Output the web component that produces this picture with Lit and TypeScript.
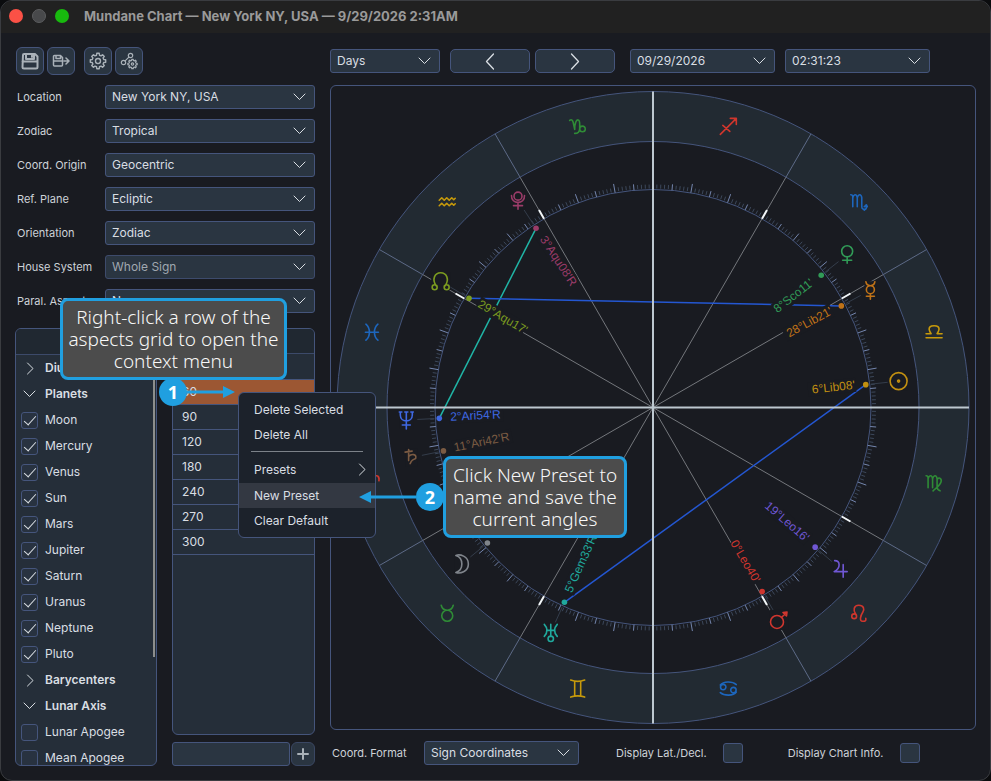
import { LitElement, html, svg, css, nothing } from "lit";
import { customElement, property } from "lit/decorators.js";
import { classMap } from "lit/directives/class-map.js";

const controlStyles = css`
  * { box-sizing: border-box; }
  button, select, input { font: inherit; color: inherit; margin: 0; }
  svg { display: block; }
  .line { fill: none; stroke: currentColor; stroke-linecap: round; stroke-linejoin: round; }
`;

const chevronDown = html`<svg class="line" width="13" height="8" viewBox="0 0 13 8" aria-hidden="true"><path d="M1 1l5.5 5.5L12 1"/></svg>`;
const chevronRight = html`<svg class="line" width="8" height="13" viewBox="0 0 8 13" aria-hidden="true"><path d="M1.5 1L7 6.5 1.5 12"/></svg>`;

@customElement("drop-down")
class DropDown extends LitElement {
  @property() value = "";
  @property() label = "";
  @property({ type: Boolean }) disabled = false;
  static styles = [controlStyles, css`
    :host { display: grid; align-items: center; height: 24px; color: #d9dee3; }
    select, svg { grid-area: 1 / 1; }
    select {
      appearance: none; width: 100%; height: 24px; padding: 0 28px 0 6px;
      background: #2a3541; border: 1px solid #45557c; border-radius: 3px;
    }
    select:disabled { color: #a0a8b0; border-color: #3d4b6c; opacity: 1; }
    svg { justify-self: end; margin-right: 9px; pointer-events: none; }
  `];
  render() {
    return html`
      <select aria-label=${this.label} ?disabled=${this.disabled}><option>${this.value}</option></select>
      ${chevronDown}`;
  }
}

const RAD = Math.PI / 180;
const R_OUTER = 316, R_SIGNS = 266, R_SCALE = 218, R_DOT = 214, R_GLYPH = 247, R_LABEL = 203;

/* Ecliptic longitude to chart coordinates: 0° Aries on the left, counter-clockwise. */
const at = (lon: number, r: number): [number, number] => [
  -r * Math.cos(lon * RAD),
  r * Math.sin(lon * RAD),
];

const FIRE = "#d0362d", EARTH = "#2f8b36", AIR = "#c79a0b", WATER = "#1d66bd";

const signs = [
  { name: "Aries", color: FIRE, d: "M-7-2C-8-8-2-9-1-3L0 8 1-3C2-9 8-8 7-2" },
  { name: "Taurus", color: EARTH, d: "M-6-8C-5-4-3-3 0-3S5-4 6-8M-5.5 2.5a5.5 5.5 0 1 0 11 0a5.5 5.5 0 1 0-11 0" },
  { name: "Gemini", color: AIR, d: "M-7-8.5Q0-6 7-8.5M-7 8.5Q0 6 7 8.5M-3-7V7M3-7V7" },
  { name: "Cancer", color: WATER, d: "M-8-3.5C-5-7.5 4-7.5 8-4M8 3.5C5 7.5-4 7.5-8 4M-7.8-1.5a2.7 2.7 0 1 0 5.4 0a2.7 2.7 0 1 0-5.4 0M2.4 1.5a2.7 2.7 0 1 0 5.4 0a2.7 2.7 0 1 0-5.4 0" },
  { name: "Leo", color: FIRE, d: "M-7 3a2.4 2.4 0 1 0 4.8 0a2.4 2.4 0 1 0-4.8 0M-3 1C-6-3-5-8 0-8S6-4 4-1 0 8 4 8 7 6 7 5" },
  { name: "Virgo", color: EARTH, d: "M-8-7Q-6-7-6-5V5M-6-4Q-5-7-3.5-7T-1.5-4V5M-1.5-4Q-.5-7 1-7T3-4V4Q3 7 6 8M3-3C4-6 8-5 7-1 6 3 2 5-1 8" },
  { name: "Libra", color: AIR, d: "M-8 5.5H8M-8 1.5H-3C-8-6-2-6.5 0-6.5S8-6 3 1.5H8" },
  { name: "Scorpio", color: WATER, d: "M-8-7Q-6-7-6-5V5M-6-4Q-5-7-3.5-7T-1.5-4V5M-1.5-4Q-.5-7 1-7T3-4V5Q3 8 7 7.5M7.5 3V6.5L5.5 8.5M5.5 5L7.5 3 8.5 5" },
  { name: "Sagittarius", color: FIRE, d: "M-8 8L8-8M2-8H8V-2M-5.5-1L1.5 5" },
  { name: "Capricorn", color: EARTH, d: "M-8-6C-6-7.5-5-6-4.5-4L-3 3C-3-3-1.5-7 .5-6.5S2-3 2 0V2C2 5.5 0 7-3 7M2 2.5a2.8 2.8 0 1 0 5.6 0a2.8 2.8 0 1 0-5.6 0" },
  { name: "Aquarius", color: AIR, d: "M-8-1.5L-5.5-4-3-1.5-.5-4 2-1.5 4.5-4 6.5-2 8-3.5M-8 4L-5.5 1.5-3 4-.5 1.5 2 4 4.5 1.5 6.5 3.5 8 2" },
  { name: "Pisces", color: WATER, d: "M-6-8Q-2.5-5-2.5 0T-6 8M6-8Q2.5-5 2.5 0T6 8M-6.5 0H6.5" },
];

const bodies = [
  { name: "Pluto", lon: 303.13, color: "#9b3c69", label: "3°Aqu08'R", w: 14, h: 18, d: "M-4-4.5a4 4 0 1 0 8 0a4 4 0 1 0-8 0M-6.5-5C-7 4 7 4 6.5-5M0 1.8V8.5M-4.5 5H4.5" },
  { name: "North Node", lon: 329.28, color: "#7c9c20", label: "29°Aqu17'", w: 19, h: 18, d: "M-4.5 4.5C-9-2-6-8.5 0-8.5S9-2 4.5 4.5M-8.5 6a2.5 2.5 0 1 0 5 0a2.5 2.5 0 1 0-5 0M3.5 6a2.5 2.5 0 1 0 5 0a2.5 2.5 0 1 0-5 0" },
  { name: "Neptune", lon: 2.9, color: "#3f68e2", label: "2°Ari54'R", w: 14, h: 18, d: "M-6-8V-5C-6 3 6 3 6-5V-8M0-8V9M-4 5H4M-7-8H-4.5M4.5-8H7M-1.5-8H1.5" },
  { name: "Saturn", lon: 11.7, color: "#7b5b43", label: "11°Ari42'R", w: 12, h: 18, d: "M-2.5-8V3M-6-5.5L1-6.5M-2.5-1C0-4 6-4 4.5 1-1 3 1 3-1 6 1 9 4 9" },
  { name: "Moon", lon: 39.3, color: "#7f848b", label: "", w: 14, h: 18, d: "M-6-8.5C-2-10 6.5-8 6.5 0S-2 10-6 8.5C2 6 2-6-6-8.5Z" },
  { name: "Uranus", lon: 65.55, color: "#20a99d", label: "5°Gem33'R", w: 14, h: 18, d: "M-6.5-8Q-1-2-6.5 4M6.5-8Q1-2 6.5 4M-4-2H4M0-8V4M-2.7 6.5a2.7 2.7 0 1 0 5.4 0a2.7 2.7 0 1 0-5.4 0" },
  { name: "Mars", lon: 120.67, color: "#d0362f", label: "0°Leo40'", w: 19, h: 20, d: "M-8.5 2a6.5 6.5 0 1 0 13 0a6.5 6.5 0 1 0-13 0M3-3L7.5-7.5M4-7.5L8-8 7.5-4Z" },
  { name: "Jupiter", lon: 139.27, color: "#7057d4", label: "19°Leo16'", w: 14, h: 18, d: "M-5.5-8C0-8 1-1-6 3H7M3-4V8.5" },
  { name: "Sun", lon: 186.13, color: "#c29011", label: "6°Lib08'", w: 18, h: 18, d: "M-8.5 0a8.5 8.5 0 1 0 17 0a8.5 8.5 0 1 0-17 0M-1 0a1 1 0 1 0 2 0a1 1 0 1 0-2 0" },
  { name: "Mercury", lon: 208.35, color: "#c07318", label: "28°Lib21'", w: 12, h: 18, d: "M-4.5-8.5C-4-5-2-4.5 0-4.5S4-5 4.5-8.5M-4-.5a4 4 0 1 0 8 0a4 4 0 1 0-8 0M0 3.5V9M-4 6H4" },
  { name: "Venus", lon: 218.18, color: "#319b57", label: "8°Sco11'", w: 13, h: 18, d: "M-5.5-3.5a5.5 5.5 0 1 0 11 0a5.5 5.5 0 1 0-11 0M0 2V8.5M-4.5 5.5H4.5" },
];

const aspects = [
  { from: "Pluto", to: "Neptune", color: "#20b5a6" },
  { from: "North Node", to: "Mercury", color: "#2457d2" },
  { from: "Uranus", to: "Sun", color: "#2457d2" },
];

@customElement("chart-wheel")
class ChartWheel extends LitElement {
  static styles = [controlStyles, css`
    :host { display: block; min-height: 0; border: 1px solid #45557c; border-radius: 6px; overflow: hidden; }
    .wheel { width: 100%; height: 100%; }
    .band { fill: none; stroke: #222a32; stroke-width: 50; }
    .ring { fill: none; stroke: #45557c; }
    .cusp { stroke: #74777c; }
    .cusp-band { stroke: #5d6a87; }
    .tick { stroke: #3c485b; }
    .tick.five, .tick.ten { stroke: #7486ae; }
    .tick.sign { stroke: #f2f6f8; stroke-width: 2; }
    .axis { stroke: #bdc8d0; stroke-width: 2; }
    .halo { fill: #191b21; }
    .leader { stroke: #343d4b; }
    .glyph { fill: none; stroke-width: 1.6; stroke-linecap: round; stroke-linejoin: round; }
    .aspect { stroke-width: 1.5; }
    .degree { font: 12px "Liberation Sans", Arial, sans-serif; }
  `];

  private segment(lon: number, a: number, b: number, cls: string) {
    const [x1, y1] = at(lon, a), [x2, y2] = at(lon, b);
    return svg`<line class=${cls} x1=${x1} y1=${y1} x2=${x2} y2=${y2} />`;
  }

  private tick(lon: number) {
    if (lon % 90 === 0) return nothing;
    if (lon % 30 === 0) return this.segment(lon, R_SCALE, R_SCALE + 10, "tick sign");
    if (lon % 10 === 0) return this.segment(lon, R_SCALE, R_SCALE + 9, "tick ten");
    if (lon % 5 === 0) return this.segment(lon, R_SCALE, R_SCALE + 6, "tick five");
    return this.segment(lon, R_SCALE + 1, R_SCALE + 5, "tick");
  }

  private degreeLabel(b: (typeof bodies)[number]) {
    if (!b.label) return nothing;
    const left = Math.cos(b.lon * RAD) > 0;
    const x = left ? -R_LABEL : R_LABEL;
    const turn = left ? -b.lon : 180 - b.lon;
    const w = b.label.length * 6;
    return svg`<g transform="rotate(${turn})">
      <rect class="halo" x=${left ? x - 1 : x - w + 1} y="-8" width=${w} height="14" />
      <text class="degree" x=${x} y="3" fill=${b.color} text-anchor=${left ? "start" : "end"}>${b.label}</text>
    </g>`;
  }

  render() {
    const degrees = Array.from({ length: 360 }, (_, i) => i);
    const cusps = degrees.filter((d) => d % 30 === 0);
    const find = (n: string) => bodies.find((b) => b.name === n)!;
    return html`<svg class="wheel" viewBox="-322 -321.5 644 643" role="img" aria-label="Mundane chart wheel">
      <circle class="band" r=${(R_OUTER + R_SIGNS) / 2} />
      <circle class="ring" r=${R_OUTER} />
      <circle class="ring" r=${R_SIGNS} />
      <circle class="ring" r=${R_SCALE} />
      ${cusps.map((d) => [this.segment(d, 0, R_SIGNS, "cusp"), this.segment(d, R_SIGNS, R_OUTER, "cusp-band")])}
      ${degrees.map((d) => this.tick(d))}
      ${aspects.map((a) => {
        const [x1, y1] = at(find(a.from).lon, R_DOT), [x2, y2] = at(find(a.to).lon, R_DOT);
        return svg`<line class="aspect" stroke=${a.color} x1=${x1} y1=${y1} x2=${x2} y2=${y2} />`;
      })}
      ${signs.map((s, i) => {
        const [x, y] = at(i * 30 + 15, 291);
        return svg`<path class="glyph" stroke=${s.color} transform="translate(${x} ${y})" d=${s.d} />`;
      })}
      ${bodies.map((b) => {
        const [x, y] = at(b.lon, R_GLYPH), [dx, dy] = at(b.lon, R_DOT);
        return svg`
          ${this.segment(b.lon, R_SCALE + 1, 236, "leader")}
          <rect class="halo" x=${x - b.w / 2} y=${y - b.h / 2} width=${b.w} height=${b.h} />
          <path class="glyph" stroke=${b.color} transform="translate(${x} ${y})" d=${b.d} />
          ${this.degreeLabel(b)}
          <circle cx=${dx} cy=${dy} r="2.8" fill=${b.color} />`;
      })}
      <line class="axis" x1=${-R_OUTER} x2=${R_OUTER} y1="0" y2="0" />
      <line class="axis" y1=${-R_OUTER} y2=${R_OUTER} x1="0" x2="0" />
    </svg>`;
  }
}

const settings = [
  { label: "Location", value: "New York NY, USA" },
  { label: "Zodiac", value: "Tropical" },
  { label: "Coord. Origin", value: "Geocentric" },
  { label: "Ref. Plane", value: "Ecliptic" },
  { label: "Orientation", value: "Zodiac" },
  { label: "House System", value: "Whole Sign", disabled: true },
  { label: "Paral. Aspects", value: "None" },
];

const objects = [
  { group: "Diurnal", open: false, items: [] },
  { group: "Planets", open: true, checked: true, items: ["Moon", "Mercury", "Venus", "Sun", "Mars", "Jupiter", "Saturn", "Uranus", "Neptune", "Pluto"] },
  { group: "Barycenters", open: false, items: [] },
  { group: "Lunar Axis", open: true, checked: false, items: ["Lunar Apogee", "Mean Apogee"] },
];

const angles = ["", "60", "90", "120", "180", "240", "270", "300"];

const gear = (teeth: number, r: number) => {
  const pts: string[] = [];
  const step = 360 / teeth;
  for (let i = 0; i < teeth; i++) {
    for (const [f, k] of [[-0.32, 0.76], [-0.2, 1], [0.2, 1], [0.32, 0.76]]) {
      const a = (i + f) * step * RAD;
      pts.push(`${(Math.sin(a) * r * k).toFixed(2)} ${(-Math.cos(a) * r * k).toFixed(2)}`);
    }
  }
  return `M${pts.join("L")}Z`;
};

const icons = {
  save: html`<svg class="line bold" width="18" height="18" viewBox="0 0 18 18"><path d="M2 3a1 1 0 0 1 1-1H14l2.5 2.5V15a1.5 1.5 0 0 1-1.5 1.5H3A1.5 1.5 0 0 1 1.5 15ZM5 2V7H13V2M1.5 9.5H16.5M11 3.5V5"/></svg>`,
  saveAs: html`<svg class="line" width="18" height="18" viewBox="0 0 18 18"><path stroke-width="1.5" d="M1.5 4.5a1 1 0 0 1 1-1H8.5L10.5 5.5V13a1 1 0 0 1-1 1H2.5a1 1 0 0 1-1-1ZM4 3.5V6.5H8.5V3.5M1.5 9H10.5M12 9H16.5M14 6L17 9 14 12"/></svg>`,
  gear: html`<svg class="line" width="18" height="18" viewBox="-9 -9 18 18"><path stroke-width="1.4" d=${gear(8, 7.8)} /><circle r="2.5" stroke-width="1.4"/></svg>`,
  aspects: html`<svg class="line" width="18" height="18" viewBox="0 0 18 18"><g stroke-width="1.2"><circle cx="10.5" cy="3.5" r="2.2"/><circle cx="3.5" cy="10.5" r="2.2"/><path d="M8.9 5.1L5.1 8.9"/><circle cx="12.5" cy="12" r="1.2"/><path transform="translate(12.5 12)" d=${gear(8, 4.7)} /></g></svg>`,
};

@customElement("app-root")
class AppRoot extends LitElement {
  static styles = [controlStyles, css`
    :host {
      display: block; height: 100vh; min-height: 640px; background: #0b0c0e;
      font: 12px/16px Inter, "Noto Sans", sans-serif; color: #d9dee3;
    }
    .window {
      position: relative; height: 100%; display: flex; flex-direction: column;
      background: #191b21; border: 1px solid #3a3c40; border-radius: 12px; overflow: hidden;
    }
    .titlebar { display: flex; align-items: center; gap: 9px; height: 32px; padding: 0 0 2px 8px; background: #212121; }
    .titlebar h1 { margin: 0 0 0 6px; font-size: 13px; line-height: 16px; font-weight: 700; color: #9a9a9a; }
    .light { width: 14px; height: 14px; padding: 0; border: 0; border-radius: 50%; }
    .close { background: #fb5146; }
    .shrink { background: #48494b; border: 1px solid #5c5d5f; }
    .grow { background: #18b90e; }

    .content { flex: 1; min-height: 0; display: grid; grid-template-columns: 300px 1fr; gap: 15px; padding: 14px; }
    .side, .main { display: flex; flex-direction: column; min-height: 0; min-width: 0; }

    .tools { display: flex; gap: 3px; padding-left: 1px; margin-bottom: 10px; }
    .tool {
      display: grid; place-items: center; width: 28px; height: 28px; padding: 0;
      background: #2a3541; border: 1px solid #45557c; border-radius: 6px; color: #a9b1b8;
    }
    .tool:nth-child(3) { margin-left: 6px; }
    .bold { stroke-width: 2; }
    .fields { display: grid; gap: 10px; margin-bottom: 15px; }
    .field { display: grid; grid-template-columns: 90px 1fr; align-items: center; }
    .caption { font-size: 11px; padding-left: 2px; white-space: nowrap; color: #cdd2d8; }

    .lists { flex: 1; min-height: 0; display: grid; grid-template-columns: 142px 143px; grid-template-rows: minmax(0, 1fr); gap: 15px; }
    .panel { display: flex; flex-direction: column; min-height: 0; background: #252e39; border: 1px solid #45557c; border-radius: 6px; overflow: hidden; }
    .panel-head { flex: none; height: 26px; background: #202831; border-bottom: 1px solid #3c4a6a; }
    .angles .panel-head { height: 25px; }
    .tree { position: relative; flex: 1; min-height: 0; overflow: hidden; }
    .tree-row { display: grid; grid-template-columns: 17px 1fr; align-items: center; gap: 7px; height: 26px; padding-left: 5px; }
    .group { width: 100%; border: 0; background: none; text-align: left; font-weight: 600; padding: 0 0 0 5px; }
    .group svg { justify-self: center; }
    .thumb { position: absolute; top: 0; right: 1px; width: 2px; height: 302px; background: #8d8e8c; }

    .check {
      appearance: none; display: grid; place-items: center; width: 17px; height: 17px;
      background: #283240; border: 1px solid #45557c; border-radius: 3px;
    }
    .check:checked::before {
      content: ""; width: 5px; height: 11px; margin-bottom: 4px;
      border: solid #d9dee3; border-width: 0 1px 1px 0; transform: rotate(42deg);
    }
    .check.large { width: 20px; height: 20px; background: #2a3541; }

    .angles { display: flex; flex-direction: column; gap: 7px; min-height: 0; }
    .angles .panel { flex: 1; }
    table { width: 100%; border-collapse: collapse; }
    td { height: 25px; padding: 0 9px; border-bottom: 1px solid #45557c; }
    .selected { background: #9c5733; }
    .add { display: flex; gap: 1px; }
    .angle-input { flex: 1; min-width: 0; height: 24px; padding: 0 6px; background: #2a3541; border: 1px solid #45557c; border-radius: 3px; }
    .plus { height: 24px; width: 24px; border-color: #3a4763; }

    .steps { display: flex; align-items: center; height: 24px; margin: 2px 0 12px; }
    .period { width: 110px; margin-right: 10px; }
    .step { display: grid; place-items: center; width: 80px; height: 24px; padding: 0; margin-right: 5px; background: #2a3541; border: 1px solid #45557c; border-radius: 5px; }
    .stamp { width: 145px; margin-left: 10px; }
    chart-wheel { flex: 1; }
    .options { display: flex; align-items: center; height: 24px; margin: 11px 0 1px; }
    .format { display: grid; grid-template-columns: 94px 155px; align-items: center; }
    .option { display: flex; align-items: center; gap: 16px; margin-left: 35px; }
    .option + .option { margin-left: 43px; }

    .menu {
      position: absolute; left: 237px; top: 391px; width: 138px; padding: 4px 0;
      background: #1c222b; border: 1px solid #45557c; border-radius: 6px;
    }
    .item { display: flex; align-items: center; justify-content: space-between; width: 100%; height: 25px; padding: 0 9px 0 15px; border: 0; background: none; text-align: left; }
    .item.parent { height: 27px; }
    .item.active { background: #333842; }
    .menu hr { margin: 4px 12px; border: 0; border-top: 1px solid #7c8289; }

    .note {
      position: absolute; display: grid; place-items: center; margin: 0; text-align: center;
      background: #4c4c4c; border: 3px solid #209fe0; border-radius: 8px; color: #f8f8f8;
      font: 340 19px/22px "Noto Sans", sans-serif; white-space: nowrap;
    }
    .note.first { left: 59px; top: 297px; width: 227px; height: 82px; }
    .note.second { left: 442px; top: 455px; width: 184px; height: 82px; }
    .pointer { position: absolute; display: flex; align-items: center; color: #209fe0; }
    .pointer.first { left: 158px; top: 377px; }
    .pointer.second { left: 358px; top: 482px; flex-direction: row-reverse; }
    .badge { display: grid; place-items: center; width: 28px; height: 28px; border-radius: 50%; background: #209fe0; color: #fff; font: 700 18px/20px "Noto Sans", sans-serif; }
    .pointer svg { fill: currentColor; }
  `];

  render() {
    return html`
      <div class="window">
        <header class="titlebar">
          <button class="light close" aria-label="Close"></button>
          <button class="light shrink" aria-label="Minimize"></button>
          <button class="light grow" aria-label="Zoom"></button>
          <h1>Mundane Chart — New York NY, USA — 9/29/2026 2:31AM</h1>
        </header>
        <div class="content">
          ${this.side()}
          <main class="main">
            <div class="steps">
              <drop-down class="period" label="Step" value="Days"></drop-down>
              <button class="step" aria-label="Previous"><svg class="line" width="10" height="17" viewBox="0 0 10 17"><path stroke-width="1.3" d="M8.5 1L1.5 8.5 8.5 16"/></svg></button>
              <button class="step" aria-label="Next"><svg class="line" width="10" height="17" viewBox="0 0 10 17"><path stroke-width="1.3" d="M1.5 1L8.5 8.5 1.5 16"/></svg></button>
              <drop-down class="stamp" label="Date" value="09/29/2026"></drop-down>
              <drop-down class="stamp" label="Time" value="02:31:23"></drop-down>
            </div>
            <chart-wheel></chart-wheel>
            <div class="options">
              <div class="format"><span class="caption">Coord. Format</span><drop-down label="Coord. Format" value="Sign Coordinates"></drop-down></div>
              <label class="option"><span class="caption">Display Lat./Decl.</span><input class="check large" type="checkbox"></label>
              <label class="option"><span class="caption">Display Chart Info.</span><input class="check large" type="checkbox"></label>
            </div>
          </main>
        </div>
        ${this.menu()}
        <p class="note first"><span>Right-click a row of the<br>aspects grid to open the<br>context menu</span></p>
        <p class="note second"><span>Click New Preset to<br>name and save the<br>current angles</span></p>
        <div class="pointer first"><span class="badge">1</span><svg width="48" height="12" viewBox="0 0 48 12"><path d="M0 4.5H36V0L48 6 36 12V7.5H0Z"/></svg></div>
        <div class="pointer second"><span class="badge">2</span><svg width="57" height="12" viewBox="0 0 57 12"><path d="M57 4.5H12V0L0 6 12 12V7.5H57Z"/></svg></div>
      </div>`;
  }

  private side() {
    return html`
      <aside class="side">
        <div class="tools">
          <button class="tool" aria-label="Save">${icons.save}</button>
          <button class="tool" aria-label="Save as">${icons.saveAs}</button>
          <button class="tool" aria-label="Settings">${icons.gear}</button>
          <button class="tool" aria-label="Aspect settings">${icons.aspects}</button>
        </div>
        <div class="fields">
          ${settings.map((s) => html`<div class="field">
            <span class="caption">${s.label}</span>
            <drop-down .label=${s.label} .value=${s.value} ?disabled=${s.disabled ?? false}></drop-down>
          </div>`)}
        </div>
        <div class="lists">
          <section class="panel" aria-label="Objects">
            <div class="panel-head"></div>
            <div class="tree">
              ${objects.map((g) => html`
                <button class="tree-row group" aria-expanded=${g.open}>${g.open ? chevronDown : chevronRight}<span>${g.group}</span></button>
                ${g.items.map((name) => html`<label class="tree-row"><input class="check" type="checkbox" .checked=${g.checked ?? false}><span>${name}</span></label>`)}`)}
              <div class="thumb"></div>
            </div>
          </section>
          <div class="angles">
            <section class="panel" aria-label="Aspect angles">
              <div class="panel-head"></div>
              <table><tbody>
                ${angles.map((a) => html`<tr class=${classMap({ selected: a === "60" })}><td>${a}</td></tr>`)}
              </tbody></table>
            </section>
            <div class="add">
              <input class="angle-input" type="text" aria-label="New angle">
              <button class="tool plus" aria-label="Add angle"><svg class="line bold" width="14" height="14" viewBox="0 0 14 14"><path d="M7 2V12M2 7H12"/></svg></button>
            </div>
          </div>
        </div>
      </aside>`;
  }

  private menu() {
    return html`
      <div class="menu" role="menu">
        <button class="item" role="menuitem">Delete Selected</button>
        <button class="item" role="menuitem">Delete All</button>
        <hr>
        <button class="item parent" role="menuitem" aria-haspopup="menu">Presets ${chevronRight}</button>
        <button class="item active" role="menuitem">New Preset</button>
        <button class="item" role="menuitem">Clear Default</button>
      </div>`;
  }
}
